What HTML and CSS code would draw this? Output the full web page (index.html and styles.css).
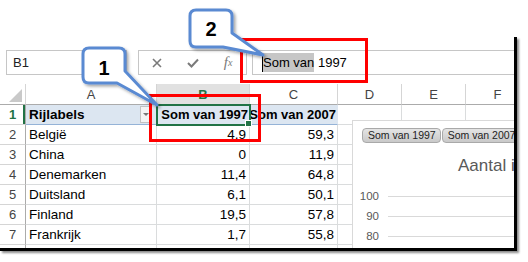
FILE: index.html
```html
<!DOCTYPE html>
<html lang="nl">
  <head>
    <meta charset="UTF-8" />
    <title>Draaitabel - Som van 1997</title>
    <link rel="stylesheet" href="styles.css">
  </head>
  <body>
    <div class="page">
      <div class="shot">
        <div class="fbar">
          <div class="namebox">B1</div>
          <div class="fxbox">
            <span class="fxbtn">
              <svg width="10" height="10" viewBox="0 0 10 10"><path d="M1 1 L9 9 M9 1 L1 9" stroke="#7a7a7a" stroke-width="1.6" fill="none"/></svg>
            </span>
            <span class="fxbtn">
              <svg width="12" height="10" viewBox="0 0 12 10"><path d="M1 5 L4.5 8.5 L11 1.5" stroke="#7a7a7a" stroke-width="2" fill="none"/></svg>
            </span>
            <span class="fxbtn fx"><i>f</i><sub>x</sub></span>
          </div>
          <div class="input"><span class="sel">Som van</span> 1997</div>
        </div>

        <div class="sheet">
          <div class="hd corner"><svg width="13" height="13" viewBox="0 0 13 13"><polygon points="13,0 13,13 0,13" fill="#c9c9c9"/></svg></div>
          <div class="hd">A</div>
          <div class="hd hd-sel">B</div>
          <div class="hd">C</div>
          <div class="hd">D</div>
          <div class="hd">E</div>
          <div class="hd">F</div>

          <div class="rh rh-sel">1</div>
          <div class="c piv lbl">Rijlabels<span class="filter"></span></div>
          <div class="c piv b1">Som van 1997</div>
          <div class="c piv">Som van 2007</div>
          <div class="c"></div><div class="c"></div><div class="c"></div>

          <div class="rh">2</div>
          <div class="c">België</div><div class="c num">4,9</div><div class="c num">59,3</div>
          <div class="c"></div><div class="c"></div><div class="c"></div>

          <div class="rh">3</div>
          <div class="c">China</div><div class="c num">0</div><div class="c num">11,9</div>
          <div class="c"></div><div class="c"></div><div class="c"></div>

          <div class="rh">4</div>
          <div class="c">Denemarken</div><div class="c num">11,4</div><div class="c num">64,8</div>
          <div class="c"></div><div class="c"></div><div class="c"></div>

          <div class="rh">5</div>
          <div class="c">Duitsland</div><div class="c num">6,1</div><div class="c num">50,1</div>
          <div class="c"></div><div class="c"></div><div class="c"></div>

          <div class="rh">6</div>
          <div class="c">Finland</div><div class="c num">19,5</div><div class="c num">57,8</div>
          <div class="c"></div><div class="c"></div><div class="c"></div>

          <div class="rh">7</div>
          <div class="c">Frankrijk</div><div class="c num">1,7</div><div class="c num">55,8</div>
          <div class="c"></div><div class="c"></div><div class="c"></div>

          <div class="rh"></div>
          <div class="c"></div><div class="c"></div><div class="c"></div>
          <div class="c"></div><div class="c"></div><div class="c"></div>
        </div>

        <div class="chart">
          <div class="fields">
            <span class="field">Som van 1997</span>
            <span class="field">Som van 2007</span>
          </div>
          <div class="title">Aantal i</div>
          <div class="axis">
            <div class="tick"><span>100</span><i></i></div>
            <div class="tick"><span>90</span><i></i></div>
            <div class="tick"><span>80</span><i></i></div>
            <div class="tick"><span>70</span><i></i></div>
          </div>
          <span class="dlabel">64,8</span>
        </div>
      </div>

      <svg class="marks" width="528" height="262" viewBox="0 0 528 262">
        <defs>
          <filter id="sh" x="-30%" y="-30%" width="160%" height="160%">
            <feDropShadow dx="2" dy="2" stdDeviation="1.5" flood-color="#000" flood-opacity="0.35"/>
          </filter>
        </defs>
        <rect x="150.5" y="95.5" width="109" height="45" fill="none" stroke="#f00" stroke-width="3"/>
        <rect x="241.5" y="39.5" width="125" height="42" fill="none" stroke="#f00" stroke-width="3"/>

        <path d="M89 48 H119 Q125 48 125 54 V71 L157 105 L117 83 H89 Q83 83 83 77 V54 Q83 48 89 48 Z"
              fill="#fff" stroke="#5a8ad2" stroke-width="3" stroke-linejoin="round" filter="url(#sh)"/>
        <text x="104" y="75" class="num-label">1</text>

        <path d="M196 10 H226 Q232 10 232 16 V33 L263 55 L223 47 H196 Q190 47 190 41 V16 Q190 10 196 10 Z"
              fill="#fff" stroke="#5a8ad2" stroke-width="3" stroke-linejoin="round" filter="url(#sh)"/>
        <text x="211" y="36" class="num-label">2</text>
      </svg>
    </div>
  </body>
</html>
```

FILE: styles.css
```css
body {
  margin: 0;
  background: #fff;
  font-family: "Liberation Sans", Arial, sans-serif;
  color: #000;
}

.page {
  position: relative;
  width: 528px;
  height: 262px;
  overflow: hidden;
}

.shot {
  position: relative;
  margin-top: 37px;
  width: 517px;
  height: 214px;
  padding-top: 13px;
  box-sizing: border-box;
  border-right: 3px solid #000;
  border-bottom: 3px solid #000;
  box-shadow: 2px 2px 2px #8c8c8c;
  overflow: hidden;
  background: #fff;
}

/* formula bar */
.fbar {
  display: flex;
  height: 26px;
}

.namebox {
  margin-left: 6px;
  width: 121px;
  height: 25px;
  box-sizing: border-box;
  border: 1px solid #c6c6c6;
  padding-left: 6px;
  font-size: 13px;
  line-height: 23px;
  color: #222;
}

.fxbox {
  display: flex;
  margin-left: 11px;
  width: 109px;
  height: 25px;
  box-sizing: border-box;
  border: 1px solid #c6c6c6;
}

.fxbtn {
  width: 36px;
  display: flex;
  align-items: center;
  justify-content: center;
}

.fx {
  font-family: "Liberation Serif", serif;
  color: #7a7a7a;
  font-size: 15px;
}

.fx sub {
  font-size: 10px;
  font-style: italic;
}

.input {
  margin-left: 5px;
  flex: 1;
  margin-right: -10px;
  height: 25px;
  box-sizing: border-box;
  border: 1px solid #c6c6c6;
  padding-left: 10px;
  font-size: 13px;
  line-height: 23px;
}

.sel {
  display: inline-block;
  background: #c6c6c6;
  border-left: 1px solid #000;
  line-height: 19px;
  margin-left: -1px;
}

/* sheet */
.sheet {
  display: grid;
  grid-template-columns: 26px 131px 93px 88px 64px 64px 64px;
  grid-template-rows: 21px repeat(8, 20px);
  margin-top: 8px;
  font-size: 13.5px;
}

.hd {
  border-right: 1px solid #d5d5d5;
  border-bottom: 1px solid #ababab;
  display: flex;
  align-items: center;
  justify-content: center;
  color: #444;
  font-size: 13px;
}

.corner {
  justify-content: flex-end;
  align-items: flex-end;
  padding: 0 3px 2px 0;
}

.hd-sel {
  background: #e1e1e1;
  color: #217346;
  font-weight: bold;
}

.rh {
  border-right: 1px solid #ababab;
  border-bottom: 1px solid #d5d5d5;
  display: flex;
  align-items: center;
  justify-content: center;
  color: #444;
  font-size: 13px;
}

.rh-sel {
  color: #217346;
  font-weight: bold;
  box-shadow: inset -2px 0 #217346;
}

.c {
  border-right: 1px solid #dadcdd;
  border-bottom: 1px solid #dadcdd;
  display: flex;
  align-items: center;
  padding: 0 3px;
  white-space: nowrap;
  overflow: hidden;
}

.num {
  justify-content: flex-end;
}

.piv {
  background: #dce6f1;
  font-weight: bold;
  font-size: 13px;
  border-right-color: #dce6f1;
  border-bottom-color: #95b3d7;
  padding: 0 1px;
  justify-content: flex-end;
}

.lbl {
  justify-content: space-between;
  padding: 0 4px 0 3px;
  font-size: 13.5px;
}

.filter {
  position: relative;
  width: 10px;
  height: 15px;
  border: 1px solid #c2c2c2;
  background: #f4f4f4;
}

.filter::after {
  content: "";
  position: absolute;
  left: 2px;
  top: 6px;
  border-left: 3px solid transparent;
  border-right: 3px solid transparent;
  border-top: 3px solid #777;
}

.b1 {
  position: relative;
  outline: 2px solid #217346;
  outline-offset: -1px;
  overflow: visible;
}

.b1::after {
  content: "";
  position: absolute;
  right: -3px;
  bottom: -3px;
  width: 5px;
  height: 5px;
  background: #217346;
  border: 1px solid #fff;
}

/* chart */
.chart {
  position: absolute;
  left: 352px;
  top: 83px;
  width: 164px;
  height: 160px;
  background: #fff;
  border: 1px solid #d9d9d9;
  border-right: 0;
  box-sizing: border-box;
  overflow: hidden;
}

.fields {
  display: flex;
  gap: 1px;
  margin: 7px 0 0 9px;
}

.field {
  font-size: 10.5px;
  line-height: 13px;
  padding: 0 4px 0 5px;
  white-space: nowrap;
  color: #222;
  background: linear-gradient(#e4e4e4, #c9c9c9);
  border: 1px solid #a9a9a9;
  border-radius: 4px;
}

.title {
  margin: 13px 0 0 105px;
  font-size: 17px;
  color: #595959;
  white-space: nowrap;
}

.axis {
  margin-top: 10px;
}

.tick {
  display: flex;
  align-items: center;
  height: 20px;
}

.tick span {
  width: 26px;
  text-align: right;
  font-size: 11.5px;
  color: #595959;
}

.tick i {
  flex: 1;
  margin-left: 9px;
  border-top: 1px solid #d9d9d9;
}

.dlabel {
  position: absolute;
  left: 82px;
  top: 125px;
  font-size: 11.5px;
  color: #404040;
}

/* callouts and red marks */
.marks {
  position: absolute;
  left: 0;
  top: 0;
}

.num-label {
  font-family: "Liberation Sans", Arial, sans-serif;
  font-weight: bold;
  font-size: 20px;
  text-anchor: middle;
  fill: #000;
}
```
